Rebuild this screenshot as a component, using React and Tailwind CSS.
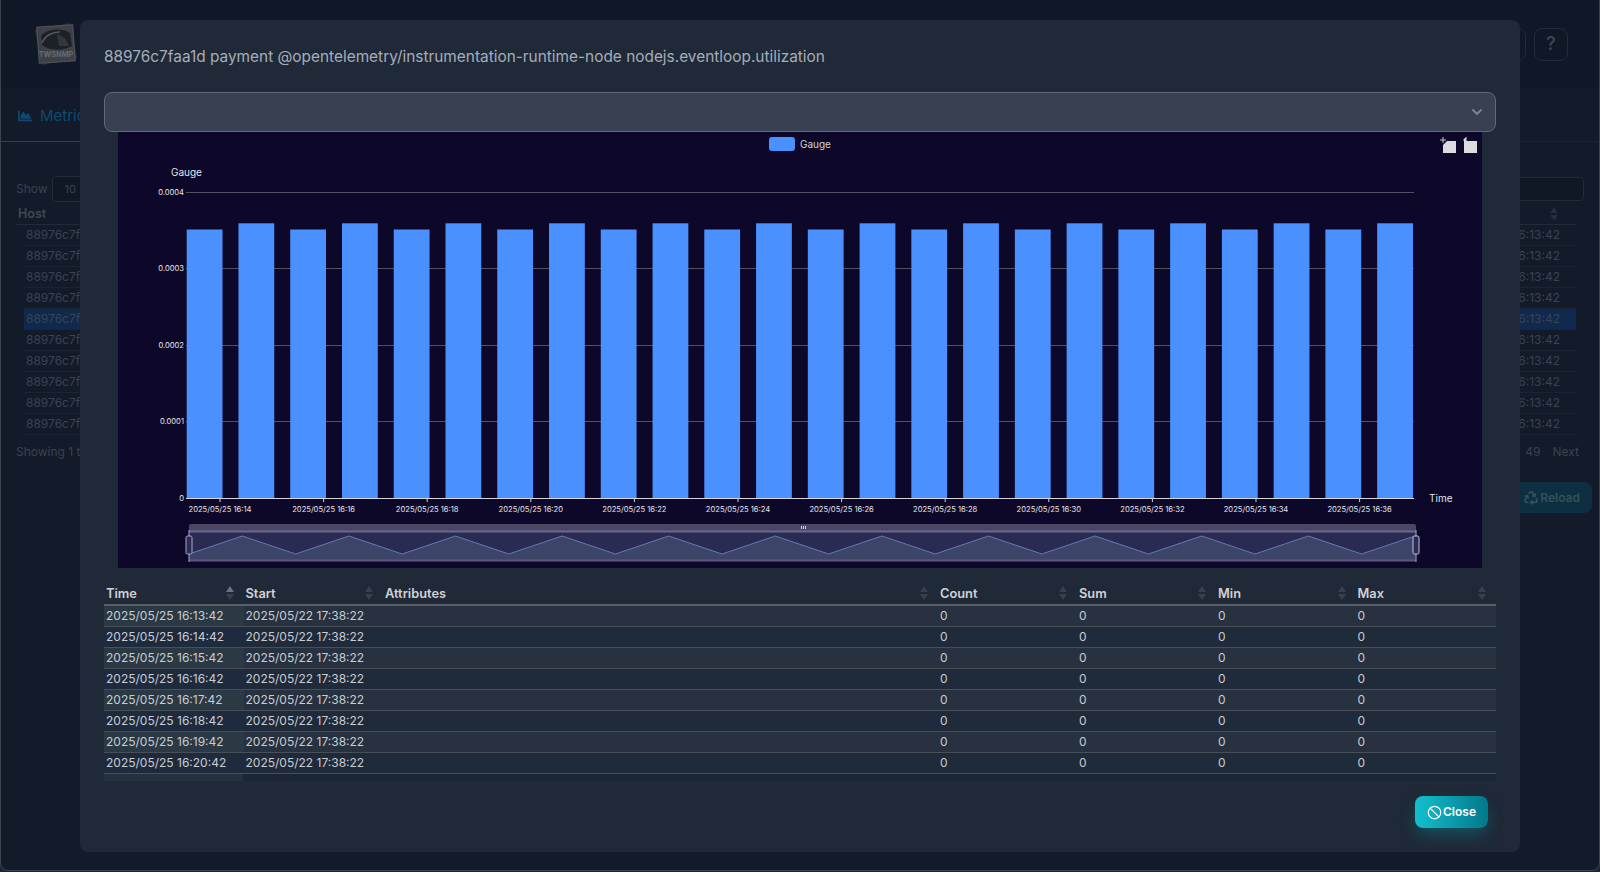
import React from 'react';
import { Ban, ChevronDown } from 'lucide-react';
import { FaChartArea, FaRecycle } from 'react-icons/fa';

const rows = ['16:13:42', '16:14:42', '16:15:42', '16:16:42', '16:17:42', '16:18:42', '16:19:42', '16:20:42'];
const columns = [
    { name: 'Time', width: 'w-[139.5px]', active: true },
    { name: 'Start', width: 'w-[139.5px]' },
    { name: 'Attributes', width: 'w-[555px]' },
    { name: 'Count', width: 'w-[139px]' },
    { name: 'Sum', width: 'w-[139px]' },
    { name: 'Min', width: 'w-[139.5px]' },
    { name: 'Max', width: 'w-[140.5px]' },
];
const xLabels = ['16:14', '16:16', '16:18', '16:20', '16:22', '16:24', '16:26', '16:28', '16:30', '16:32', '16:34', '16:36'];
const yLabels = [['0.0004', 60], ['0.0003', 136], ['0.0002', 213], ['0.0001', 289], ['0', 366]];
const bars = Array.from({ length: 24 }, (_, i) => i);
const spark = bars.map(i => [71 + i * 53.3, i % 2 ? 404 : 422]);
const sparkLine = spark.map(p => p.join(',')).join(' ');

function SortArrows({ active }) {
    return (
        <svg width="10" height="16" viewBox="0 0 10 16" className="absolute right-[9px] top-[3px]">
            <path d="M5 1 L9 7 L1 7 Z" className={active ? 'fill-[#6b7280]' : 'fill-[#364150]'} />
            <path d="M5 15 L9 9 L1 9 Z" className="fill-[#364150]" />
        </svg>
    );
}

function Logo() {
    return (
        <svg width="46" height="46" viewBox="0 0 46 46" className="shrink-0">
            <rect x="5" y="5" width="36" height="36" fill="#2a2f3a" transform="rotate(-11 23 23)" />
            <rect x="5" y="5" width="36" height="36" fill="#3d4047" stroke="#51555d" transform="rotate(-4 23 23)" />
            <path d="M8 15 C13 8 28 6 37 12 L39 25 C30 30 16 30 9 24 Z" fill="#1d2027" />
            <path d="M9 22 C12 14 20 11 27 11" fill="none" stroke="#555a63" strokeWidth="1.5" />
            <path d="M24 13 C30 15 34 19 36 25 L26 25 Z" fill="#33363d" />
            <text x="23" y="36" textAnchor="middle" fontSize="7.4" fontWeight="700" fill="#666a72" className="[font-family:'Liberation_Sans',sans-serif]">TWSNMP</text>
        </svg>
    );
}

function Chart() {
    return (
        <svg width="1364" height="436" viewBox="0 0 1364 436" className="block mx-[14px] bg-[#0d0829] shrink-0 [font-family:'Liberation_Sans',sans-serif]">
            <rect x="651" y="5" width="26" height="14" rx="3" fill="#4a90ff" />
            <text x="682" y="15.5" fontSize="10" fill="#d4d4d8">Gauge</text>
            <path d="M1325 5 V11 M1322 8 H1328" stroke="#c9c9d2" strokeWidth="1" />
            <path d="M1325 21 V13 L1329 9 H1338 V21 Z" fill="#dcdce0" />
            <path d="M1346 21 V9 H1359 V21 Z" fill="#dcdce0" />
            <path d="M1348.5 4.5 L1345 8 L1348.5 11 Z" fill="#dcdce0" />
            <text x="53" y="44" fontSize="10" fill="#e4e4e7">Gauge</text>
            {yLabels.map(([label, y]) => (
                <text key={label} x="66" y={y + 3} textAnchor="end" fontSize="7.6" fill="#e4e4e7">{label}</text>
            ))}
            {yLabels.slice(0, 4).map(([label, y]) => (
                <line key={label} x1="68" x2="1296" y1={y + 0.5} y2={y + 0.5} stroke="#53505f" strokeWidth="1" />
            ))}
            {bars.map(i => {
                const top = i % 2 ? 91.3 : 97.5;
                return <rect key={i} x={68.7 + i * 51.76} y={top} width="35.8" height={366 - top} fill="#4a90ff" />;
            })}
            <line x1="68" x2="1296" y1="366.5" y2="366.5" stroke="#d6d6da" strokeWidth="1" />
            {xLabels.map((t, i) => (
                <g key={t}>
                    <line x1={102 + i * 103.6} x2={102 + i * 103.6} y1="366" y2="370" stroke="#d6d6da" />
                    <text x={102 + i * 103.6} y="380" textAnchor="middle" fontSize="7.6" fill="#e4e4e7">2025/05/25 {t}</text>
                </g>
            ))}
            <text x="1311" y="370" fontSize="10" fill="#e4e4e7">Time</text>

            <path d="M71 394 a2 2 0 0 1 2 -2 H1296 a2 2 0 0 1 2 2 V399 H71 Z" fill="#4a4663" />
            <rect x="71" y="399" width="1227" height="30" fill="#2a2a52" />
            <polygon points={`71,428 ${sparkLine} 1297,428`} fill="#3c4468" />
            <polyline points={sparkLine} fill="none" stroke="#5f7db5" strokeWidth="1" />
            <line x1="71" x2="1298" y1="399.5" y2="399.5" stroke="#6a6890" strokeWidth="2" />
            <line x1="71" x2="1298" y1="428.5" y2="428.5" stroke="#5a5a80" strokeWidth="2" />
            <path d="M683.5 394 V397 M685.5 394 V397 M687.5 394 V397" stroke="#d4d4dc" strokeWidth="1" />
            <line x1="71" x2="71" y1="398" y2="430" stroke="#a9a9c4" />
            <line x1="1298" x2="1298" y1="398" y2="430" stroke="#a9a9c4" />
            <rect x="68" y="404" width="6" height="18" rx="1.5" fill="#2d2b55" stroke="#a9a9c4" />
            <rect x="1295" y="404" width="6" height="18" rx="1.5" fill="#2d2b55" stroke="#c4c4d8" />
        </svg>
    );
}

function MetricTable() {
    return (
        <table className="w-[1392px] table-fixed border-collapse shrink-0 mt-[14px] text-[12px] leading-[20px] text-[#c9ccd1]">
            <thead>
                <tr className="h-[23px] border-b-2 border-[#5b6068]">
                    {columns.map(c => (
                        <th key={c.name} className={`${c.width} relative px-[2px] pt-[2px] text-left text-[12.8px] font-semibold text-[#d0d2d6]`}>
                            {c.name}
                            <SortArrows active={c.active} />
                        </th>
                    ))}
                </tr>
            </thead>
            <tbody>
                {rows.map((t, i) => (
                    <tr key={t} className={`h-[21px] border-b border-[#4a4f57] ${i % 2 ? 'bg-[#1f2a3a]' : 'bg-[#273140]'}`}>
                        <td className={`px-[2px] ${i % 2 ? 'bg-[#1e2b3f]' : 'bg-[#2b3945]'}`}>2025/05/25 {t}</td>
                        <td className="px-[2px]">2025/05/22 17:38:22</td>
                        <td className="px-[2px]"></td>
                        <td className="px-[2px]">0</td>
                        <td className="px-[2px]">0</td>
                        <td className="px-[2px]">0</td>
                        <td className="px-[2px]">0</td>
                    </tr>
                ))}
            </tbody>
        </table>
    );
}

function Background() {
    return (
        <div className="flex flex-col h-[871px] border-x border-b border-[#3b4250] rounded-b-lg bg-[#131a2a] overflow-hidden">
            <div className="h-[88px] shrink-0 bg-[#101828] flex items-center justify-between pl-[32px] pr-[31px]">
                <Logo />
                <div className="flex gap-[8px]">
                    <div className="w-[34px] h-[33px] rounded-lg border border-[#222b3a]"></div>
                    <div className="w-[34px] h-[33px] rounded-lg border border-[#222b3a] flex items-center justify-center text-[#3a4352] text-lg font-semibold">?</div>
                </div>
            </div>
            <div className="h-[54px] shrink-0 border-b border-[#1b2433] flex">
                <div className="w-[90px] flex items-center gap-[8px] pl-[17px] pt-[3px] border-b border-[#0e4a73] text-[#0e4a73] text-[15px] h-[54px]">
                    <FaChartArea size={14} /> Metric
                </div>
            </div>
            <div className="flex flex-col px-[15px] pt-[34px] text-[12px] text-[#3a4352]">
                <div className="flex justify-between items-center h-[26px]">
                    <div className="flex items-center gap-[4px]">
                        Show
                        <div className="w-[60px] h-[26px] border border-[#222b3a] rounded bg-[#101725] pl-[12px] leading-[24px] text-[11px]">10</div>
                    </div>
                    <div className="w-[200px] h-[24px] border border-[#222b3a] rounded bg-[#101725]"></div>
                </div>
                <div className="flex justify-between items-center h-[23px] pt-[2px] mr-[8px] px-[2px] border-b border-[#222b3a] text-[12.5px] font-semibold text-[#3f4856] relative">
                    <span>Host</span>
                    <svg width="10" height="16" viewBox="0 0 10 16" className="absolute right-[17px] top-[4px]">
                        <path d="M5 1 L9 7 L1 7 Z" className="fill-[#252e3d]" />
                        <path d="M5 15 L9 9 L1 9 Z" className="fill-[#252e3d]" />
                    </svg>
                </div>
                <div className="flex flex-col mr-[8px] ml-[8px]">
                    {Array.from({ length: 10 }, (_, i) => (
                        <div key={i} className={`h-[21px] flex justify-between items-center px-[2px] pr-[16px] border-b border-[#1b2433] ${i === 4 ? 'bg-[#10294f]' : ''}`}>
                            <span>88976c7faa1d</span>
                            <span>2025/05/25 16:13:42</span>
                        </div>
                    ))}
                </div>
                <div className="flex justify-between items-center mt-[7px] h-[20px] mr-[5px]">
                    <span>Showing 1 to 10 of 490 entries</span>
                    <div className="flex gap-[12px]">
                        <span>49</span>
                        <span>Next</span>
                    </div>
                </div>
                <div className="flex justify-end mt-[20px] mr-[-8px]">
                    <div className="h-[31px] w-[100px] flex items-center justify-end gap-[2px] pr-[12px] rounded-lg bg-[#0d2f41] text-[#36505f] font-semibold">
                        <FaRecycle size={14} /> Reload
                    </div>
                </div>
            </div>
        </div>
    );
}

export default function App() {
    return (
        <div className="relative w-[1600px] h-[872px] overflow-hidden bg-[#1f2430] [font-family:Inter,sans-serif]">
            <Background />
            <div className="absolute left-[80px] top-[20px] w-[1440px] h-[832px] rounded-lg bg-[#1f2937] p-[24px] flex flex-col">
                <h2 className="h-[24px] pt-[1px] text-[15.4px] leading-[24px] text-[#a6adba] mb-[24px]">
                    88976c7faa1d payment @opentelemetry/instrumentation-runtime-node nodejs.eventloop.utilization
                </h2>
                <div className="h-[40px] shrink-0 rounded-lg border border-[#5f6875] bg-[#374151] flex items-center justify-end pr-[10px] text-[#7d838e]">
                    <ChevronDown size={16} strokeWidth={3} />
                </div>
                <Chart />
                <MetricTable />
                <div className="h-[7px] w-[1392px] shrink-0 bg-[#1c2533]">
                    <div className="h-[7px] w-[139px] bg-[#263140]"></div>
                </div>
                <div className="flex justify-end mt-[15px] pr-[8px]">
                    <button className="h-[32px] w-[73px] rounded-lg flex items-center justify-center gap-[1px] text-white text-[12px] font-semibold bg-gradient-to-r from-[#14c0d0] to-[#04788a] shadow-[0_8px_16px_-2px_rgba(6,148,162,0.4)]">
                        <Ban size={15} /> Close
                    </button>
                </div>
            </div>
        </div>
    );
}
